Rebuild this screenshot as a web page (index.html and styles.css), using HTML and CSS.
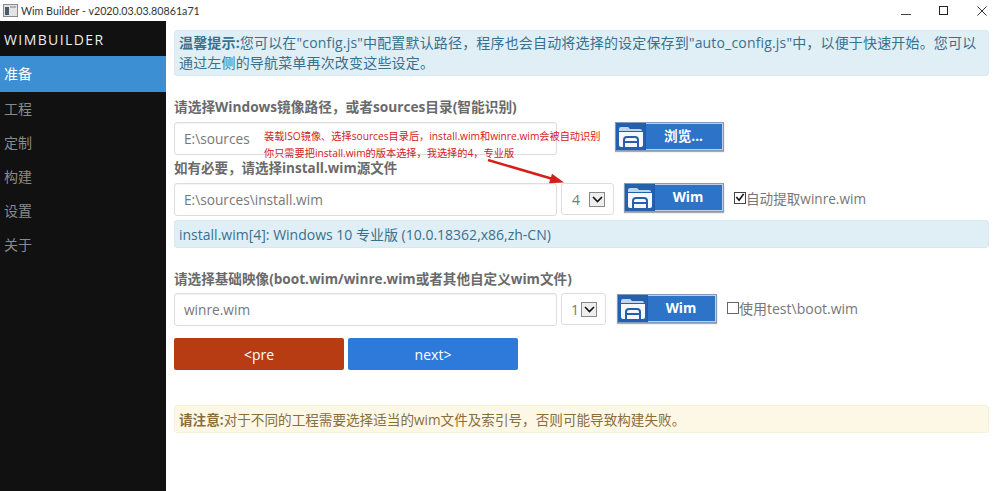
FILE: index.html
```html
<!DOCTYPE html>
<html lang="zh-CN">
<head>
    <meta charset="UTF-8">
    <meta name="viewport" content="width=device-width, initial-scale=1.0">
    <title>Wim Builder</title>
    <link rel="stylesheet" href="styles.css">
</head>
<body>
    <!-- Window title bar -->
    <header class="titlebar">
        <svg class="app-icon" width="15" height="15" viewBox="0 0 15 15">
            <rect x="0.500" y="1.500" width="14" height="12" fill="#e4e4e4" stroke="#8a8a8a"/>
            <rect x="2" y="4" width="4" height="8" fill="#4a5a68"/>
            <rect x="7" y="3" width="6" height="2" fill="#a8b4bc"/>
        </svg>
        <span class="title-text">Wim Builder - v2020.03.03.80861a71</span>
        <div class="window-controls">
            <svg width="10" height="10" viewBox="0 0 10 10"><path d="M0 8.500H10" stroke="#444" fill="none"/></svg>
            <svg width="10" height="10" viewBox="0 0 10 10"><rect x="0.500" y="0.500" width="8" height="8" stroke="#222" fill="none"/></svg>
            <svg width="10" height="10" viewBox="0 0 10 10"><path d="M0.500 0.500L9.500 9.500M9.500 0.500L0.500 9.500" stroke="#333" fill="none"/></svg>
        </div>
    </header>

    <div class="app">
        <!-- Navigation -->
        <nav class="sidebar">
            <div class="brand">WIMBUILDER</div>
            <a class="nav-item active">准备</a>
            <a class="nav-item">工程</a>
            <a class="nav-item">定制</a>
            <a class="nav-item">构建</a>
            <a class="nav-item">设置</a>
            <a class="nav-item">关于</a>
        </nav>

        <main class="content">
            <div class="alert alert-info alert-tip"><b>温馨提示:</b>您可以在"config.js"中配置默认路径，程序也会自动将选择的设定保存到"auto_config.js"中，以便于快速开始。您可以通过左侧的导航菜单再次改变这些设定。</div>

            <!-- Source path -->
            <h4 class="field-label first">请选择Windows镜像路径，或者sources目录(智能识别)</h4>
            <div class="field-row">
                <input class="text-input" type="text" value="E:\sources">
                <button class="pick-button browse">
                    <span class="pick-icon">
                        <svg width="24" height="20" viewBox="0 0 24 20"><path d="M0 4V2Q0 0 2 0H9L11 2H21Q23 2 23 4Z" fill="#bfd5ee"/><path d="M0 5H24V18Q24 20 22 20H2Q0 20 0 18Z" fill="#f4f8fc"/><path d="M5 20V13Q5 10 8 10H16Q19 10 19 13V20M6 15H18" stroke="#2560ae" stroke-width="2" fill="none"/></svg>
                    </span>
                    <span class="pick-text">浏览...</span>
                </button>
            </div>

            <!-- Install wim -->
            <h4 class="field-label second">如有必要，请选择install.wim源文件</h4>
            <div class="field-row">
                <input class="text-input" type="text" value="E:\sources\install.wim">
                <div class="index-select wide"><span>4</span><i class="select-arrow"><svg width="11" height="7" viewBox="0 0 11 7"><path d="M1 1L5.500 5.500L10 1" stroke="#111" stroke-width="1.600" fill="none"/></svg></i></div>
                <button class="pick-button wim">
                    <span class="pick-icon">
                        <svg width="24" height="20" viewBox="0 0 24 20"><path d="M0 4V2Q0 0 2 0H9L11 2H21Q23 2 23 4Z" fill="#bfd5ee"/><path d="M0 5H24V18Q24 20 22 20H2Q0 20 0 18Z" fill="#f4f8fc"/><path d="M5 20V13Q5 10 8 10H16Q19 10 19 13V20M6 15H18" stroke="#2560ae" stroke-width="2" fill="none"/></svg>
                    </span>
                    <span class="pick-text">Wim</span>
                </button>
                <label class="check-label"><i class="checkbox checked"><svg width="11" height="11" viewBox="0 0 11 11"><path d="M1.500 5L4.500 8.500L9.500 1.500" stroke="#111" stroke-width="1.800" fill="none"/></svg></i>自动提取winre.wim</label>
            </div>
            <div class="alert alert-info alert-version">install.wim[4]: Windows 10 专业版 (10.0.18362,x86,zh-CN)</div>

            <!-- Base image -->
            <h4 class="field-label third">请选择基础映像(boot.wim/winre.wim或者其他自定义wim文件)</h4>
            <div class="field-row">
                <input class="text-input" type="text" value="winre.wim">
                <div class="index-select"><span>1</span><i class="select-arrow"><svg width="11" height="7" viewBox="0 0 11 7"><path d="M1 1L5.500 5.500L10 1" stroke="#111" stroke-width="1.600" fill="none"/></svg></i></div>
                <button class="pick-button base">
                    <span class="pick-icon">
                        <svg width="24" height="20" viewBox="0 0 24 20"><path d="M0 4V2Q0 0 2 0H9L11 2H21Q23 2 23 4Z" fill="#bfd5ee"/><path d="M0 5H24V18Q24 20 22 20H2Q0 20 0 18Z" fill="#f4f8fc"/><path d="M5 20V13Q5 10 8 10H16Q19 10 19 13V20M6 15H18" stroke="#2560ae" stroke-width="2" fill="none"/></svg>
                    </span>
                    <span class="pick-text">Wim</span>
                </button>
                <label class="check-label base-check"><i class="checkbox"></i>使用test\boot.wim</label>
            </div>

            <div class="nav-buttons">
                <button class="step-button pre">&lt;pre</button>
                <button class="step-button next">next&gt;</button>
            </div>

            <div class="alert alert-warning"><b>请注意:</b>对于不同的工程需要选择适当的wim文件及索引号，否则可能导致构建失败。</div>

            <!-- Annotation drawn over the form -->
            <div class="note">
                <p>装载ISO镜像、选择sources目录后，install.wim和winre.wim会被自动识别</p>
                <p>你只需要把install.wim的版本选择，我选择的4，专业版</p>
            </div>
            <svg class="note-arrow" width="84" height="32" viewBox="0 0 84 32">
                <path d="M2 1L66 19.700" stroke="#d3201c" stroke-width="2.500" fill="none"/>
                <path d="M78 23.500L63 24.300L66 14.700Z" fill="#d3201c"/>
            </svg>
        </main>
    </div>
</body>
</html>
```

FILE: styles.css
```css
* {
    box-sizing: border-box;
}
body {
    margin: 0;
    height: 491px;
    overflow: hidden;
    background: #fff;
    color: #555;
    font-family: "Open Sans", "Noto Sans CJK SC", sans-serif;
    font-size: 14px;
}
.titlebar {
    display: flex;
    align-items: center;
    height: 21px;
    padding-left: 3px;
    color: #333;
    font-family: Lato, "Noto Sans CJK SC", sans-serif;
    font-size: 10.700px;
}
.app-icon {
    margin-right: 3px;
}
.window-controls {
    display: flex;
    gap: 28px;
    margin-left: auto;
    padding-right: 13px;
}
.app {
    display: flex;
    height: 470px;
}
.sidebar {
    flex: none;
    width: 166px;
    background: #111;
}
.brand {
    height: 35px;
    padding: 10px 0 0 4px;
    color: #eee;
    font-size: 14px;
    letter-spacing: 1.400px;
    line-height: 18px;
}
.nav-item {
    display: block;
    height: 34px;
    padding-left: 4px;
    color: #8a8a8a;
    font-size: 14px;
    line-height: 34px;
}
.nav-item.active {
    height: 36px;
    background: #3d8fd3;
    color: #fff;
    line-height: 36px;
}
.content {
    position: relative;
    flex: 1;
    padding: 9px 11px 0 8px;
}
.alert {
    border: 1px solid #d8e9f1;
    border-radius: 3px;
    background: #e0eef5;
    color: #38718f;
    font-size: 14px;
}
.alert-tip {
    height: 46px;
    padding: 2px 4px;
    letter-spacing: 0.170px;
    line-height: 20px;
}
.alert-version {
    height: 28px;
    margin-top: 4px;
    padding: 0 4px;
    line-height: 27px;
}
.alert-warning {
    height: 28px;
    margin-top: 35px;
    padding: 0 4px;
    border-color: #f8f1da;
    background: #fcf8e5;
    color: #8a6d3b;
    font-size: 13.600px;
    line-height: 27px;
}
.field-label {
    height: 20px;
    margin: 0;
    color: #6a6a6a;
    font-size: 13.700px;
    line-height: 20px;
}
.field-label.first {
    margin-top: 21px;
    margin-bottom: 5px;
}
.field-label.second {
    margin-top: 3px;
    margin-bottom: 5px;
    font-size: 13.500px;
}
.field-label.third {
    margin-top: 21px;
    margin-bottom: 4px;
    font-size: 13.600px;
}
.field-row {
    display: flex;
    align-items: flex-start;
}
.text-input {
    flex: none;
    width: 383px;
    height: 33px;
    padding: 0 9px;
    border: 1px solid #ddd;
    border-radius: 3px;
    color: #777;
    font: inherit;
    font-size: 13.700px;
    box-shadow: inset 0 1px 1px rgba(0, 0, 0, 0.05);
}
.index-select {
    display: flex;
    flex: none;
    align-items: center;
    justify-content: space-between;
    width: 45px;
    height: 32px;
    margin-left: 4px;
    padding: 0 8px 0 9px;
    border: 1px solid #ddd;
    border-radius: 3px;
    color: #777;
}
.index-select.wide {
    width: 53px;
    padding: 0 8px 0 10px;
}
.select-arrow {
    display: flex;
    align-items: center;
    justify-content: center;
    width: 16px;
    height: 15px;
    border: 1px solid #888;
    background: #eee;
}
.pick-button {
    display: flex;
    flex: none;
    align-items: stretch;
    width: 100px;
    height: 29px;
    padding: 0;
    border: 1px solid #7f9cbc;
    background: #2d73c8;
    color: #fff;
    font: inherit;
    font-size: 13.600px;
    font-weight: bold;
    box-shadow: 0 1px 1px #aaa, inset 0 0 0 1px #bcd0e6;
}
.pick-button.browse {
    width: 109px;
    margin-left: 58px;
}
.pick-button.wim {
    margin: 0 10px;
}
.pick-button.base {
    margin: 1px 0 0 11px;
}
.pick-icon {
    display: flex;
    flex: none;
    align-items: center;
    justify-content: center;
    width: 30px;
    background: #2560ae;
    border-right: 1px solid #1f5ba6;
}
.pick-text {
    flex: 1;
    padding-right: 2px;
    line-height: 26px;
}
.check-label {
    display: flex;
    align-items: center;
    height: 29px;
    color: #777;
    font-size: 13.600px;
}
.base-check {
    margin-left: 10px;
    font-size: 14px;
}
.checkbox {
    display: flex;
    align-items: center;
    justify-content: center;
    width: 12px;
    height: 12px;
    border: 1px solid #444;
}
.base-check .checkbox {
    border-color: #666;
}
.nav-buttons {
    display: flex;
    gap: 4px;
    margin-top: 12px;
}
.step-button {
    width: 170px;
    height: 32px;
    border: 1px solid transparent;
    border-radius: 2px;
    color: #fff;
    font: inherit;
}
.step-button.pre {
    background: #b73b13;
}
.step-button.next {
    background: #2d7ada;
}
.note {
    position: absolute;
    top: 107px;
    left: 98px;
    color: #d3201c;
    font-size: 10.200px;
    line-height: 17px;
    white-space: nowrap;
}
.note p {
    margin: 0;
}
.note-arrow {
    position: absolute;
    top: 138px;
    left: 320px;
}
```
